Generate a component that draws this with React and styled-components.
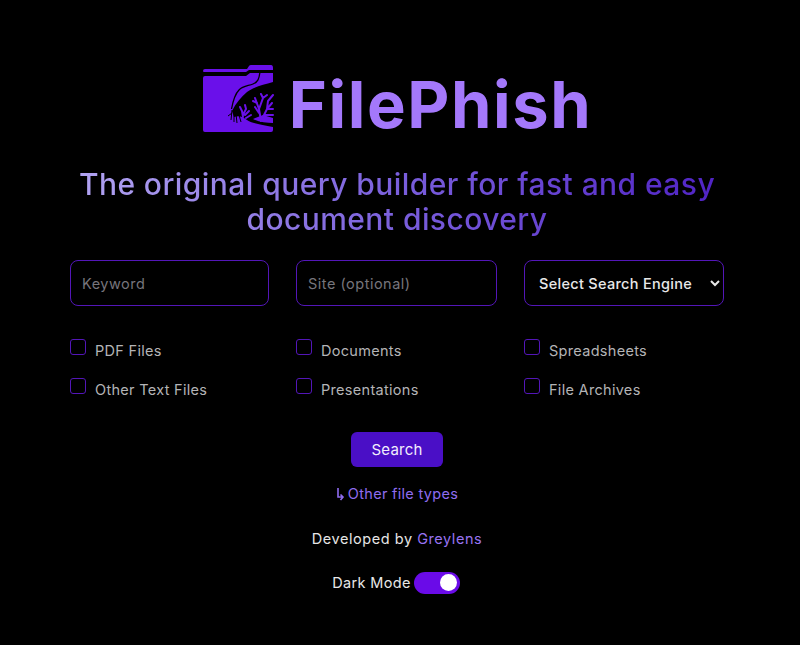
import React from "react";
import styled, { createGlobalStyle } from "styled-components";

const Global = createGlobalStyle`
  html, body { margin: 0; padding: 0; background: #000; }
  body { font-family: "Inter", "Liberation Sans", sans-serif; width: 800px; height: 645px; overflow: hidden; }
`;

const Page = styled.main`
  width: 800px;
  height: 645px;
  box-sizing: border-box;
  padding: 60px 76px 0 70px;
  display: flex;
  flex-direction: column;
  align-items: center;
`;

const Brand = styled.header`
  display: flex;
  align-items: center;
  gap: 14px;
  height: 80px;
  margin-left: -1px;
`;

const BrandName = styled.h1`
  margin: 10px 0 0;
  font-family: "Inter", sans-serif;
  font-size: 65px;
  line-height: 80px;
  font-weight: 700;
  color: #a478fb;
  letter-spacing: 1.6px;
`;

const Tagline = styled.h2`
  margin: 27px 0 0;
  width: 654px;
  text-align: center;
  font-family: "Inter", sans-serif;
  font-size: 30px;
  line-height: 35px;
  font-weight: 500;
  letter-spacing: 0.43px;
  background: linear-gradient(90deg, #b3a5f2 0%, #7a5fdc 50%, #4f22c4 100%);
  -webkit-background-clip: text;
  background-clip: text;
  color: transparent;
`;

const Fields = styled.section`
  margin-top: 23px;
  width: 654px;
  display: grid;
  grid-template-columns: 198.5px 200.5px 200px;
  column-gap: 27.5px;
`;

const TextField = styled.input`
  box-sizing: border-box;
  width: 100%;
  height: 46px;
  padding: 0 11px;
  background: #000;
  border: 1px solid #5316b8;
  border-radius: 8px;
  font-family: "Inter", sans-serif;
  font-size: 14.5px;
  letter-spacing: 0.5px;
  color: #ddd;
  outline: none;
  &::placeholder { color: #77757c; opacity: 1; }
`;

const EngineSelect = styled.select`
  box-sizing: border-box;
  width: 100%;
  height: 46px;
  padding: 0 10px;
  background: #000;
  border: 1px solid #5316b8;
  border-radius: 8px;
  font-family: "Inter", sans-serif;
  font-size: 14.5px;
  font-weight: 500;
  letter-spacing: 0.3px;
  color: #e8e8e8;
  outline: none;
`;

const Options = styled.section`
  margin-top: 33px;
  width: 654px;
  display: grid;
  grid-template-columns: 198.5px 200.5px 200px;
  column-gap: 27.5px;
  row-gap: 19px;
`;

const Option = styled.label`
  display: flex;
  align-items: flex-start;
  gap: 9px;
  height: 20px;
  font-size: 14.5px;
  line-height: 20px;
  letter-spacing: 0.3px;
  color: #b4b4b6;
`;

const Box = styled.span`
  box-sizing: border-box;
  flex: none;
  width: 16px;
  height: 16px;
  border: 1px solid #5316b8;
  border-radius: 3px;
`;

const OptionText = styled.span`
  margin-top: 2px;
`;

const SearchButton = styled.button`
  margin-top: 34px;
  width: 92px;
  height: 35px;
  border: 0;
  border-radius: 6px;
  background: #4a0fc6;
  color: #f2eefc;
  font-family: "Inter", sans-serif;
  font-size: 15px;
  font-weight: 400;
  letter-spacing: 0.2px;
`;

const OtherLink = styled.a`
  margin-top: 17px;
  display: flex;
  align-items: center;
  gap: 3px;
  height: 20px;
  font-size: 14.5px;
  line-height: 20px;
  letter-spacing: 0.3px;
  color: #8f6cf0;
`;

const Credit = styled.p`
  margin: 25px 0 0;
  height: 20px;
  font-size: 14.5px;
  line-height: 20px;
  font-weight: 400;
  letter-spacing: 0.55px;
  color: #e6e6e6;
`;

const CreditName = styled.span`
  color: #9873f2;
`;

const ModeRow = styled.div`
  margin: 22px 0 0 -2px;
  display: flex;
  align-items: center;
  gap: 3px;
  height: 23px;
  font-size: 14.5px;
  font-weight: 400;
  letter-spacing: 0.35px;
  color: #e8e8e8;
`;

const Toggle = styled.span`
  width: 46px;
  height: 22px;
  border-radius: 11px;
  background: #6a0be8;
  display: flex;
  align-items: center;
  justify-content: flex-end;
  padding-right: 3px;
  box-sizing: border-box;
`;

const Knob = styled.span`
  width: 17px;
  height: 17px;
  border-radius: 50%;
  background: #fff;
`;

const FolderLogo = () => (
  <svg width="74" height="70" viewBox="0 0 74 70" aria-hidden="true">
    <path fill="#6a10ea" d="M2 6 Q2 4 4 4 H46 L48 1 Q48.5 0 50 0 H70 Q72 0 72 3 V5 H48 L45 7 H3 Q2 7 2 6 Z" />
    <path fill="#6a10ea" d="M2 13 Q2 11 4 11 H45 L49 8 H72 V65 Q72 67 70 67 H4 Q2 67 2 65 Z" />
    <path fill="#000" d="M72 17 C62 20 52 22 46 27 C40 32 35 38 31 46 L33 52 C38 50 42 52 46 55 C50 58 60 60 72 62 Z" />
    <path fill="none" stroke="#000" strokeWidth="1.3" d="M59 7 C58 14 57 17 52 19 C47 21 42 21 38 25 C34 29 32 36 30.5 44" />
    <g fill="none" stroke="#6a10ea" strokeWidth="2" strokeLinecap="round">
      <path d="M60 56 L58 44 L54 33 M58 44 L62 33 L60 29 M62 33 L66 30 M58 48 L54 42 M61 54 L66 44 L71 38 M66 44 L67 36 L72 30 M66 44 L72 44 M64 50 L72 50 M56 38 L52 36" />
      <path d="M42 52 L41 46 L39 42 M42 50 L45 44 L44 40 M44 50 L48 46 M45 53 L50 50" />
    </g>
    <path fill="#6a10ea" d="M52 54 C58 57 66 58 72 58 V53 L62 50 Z" />
    <path fill="none" stroke="#000" strokeWidth="1" d="M31 45 L30 55 M33 47 L33 57 M35 49 L36 58 M38 50 L40 57 M31 48 L27 51" />
  </svg>
);

const ArrowIcon = () => (
  <svg width="9" height="14" viewBox="0 0 9 14" aria-hidden="true">
    <path fill="none" stroke="#8f6cf0" strokeWidth="1.6" d="M2 1 V10 H6 M4.5 7.5 L7 10 L4.5 13" />
  </svg>
);

const types = [
  "PDF Files", "Documents", "Spreadsheets",
  "Other Text Files", "Presentations", "File Archives",
];

export default function App() {
  return (
    <>
      <Global />
      <Page>
        <Brand>
          <FolderLogo />
          <BrandName>FilePhish</BrandName>
        </Brand>
        <Tagline>The original query builder for fast and easy document discovery</Tagline>
        <Fields>
          <TextField placeholder="Keyword" />
          <TextField placeholder="Site (optional)" />
          <EngineSelect defaultValue="">
            <option value="">Select Search Engine</option>
          </EngineSelect>
        </Fields>
        <Options>
          {types.map((t) => (
            <Option key={t}>
              <Box />
              <OptionText>{t}</OptionText>
            </Option>
          ))}
        </Options>
        <SearchButton>Search</SearchButton>
        <OtherLink><ArrowIcon />Other file types</OtherLink>
        <Credit>Developed by <CreditName>Greylens</CreditName></Credit>
        <ModeRow>
          Dark Mode
          <Toggle><Knob /></Toggle>
        </ModeRow>
      </Page>
    </>
  );
}
